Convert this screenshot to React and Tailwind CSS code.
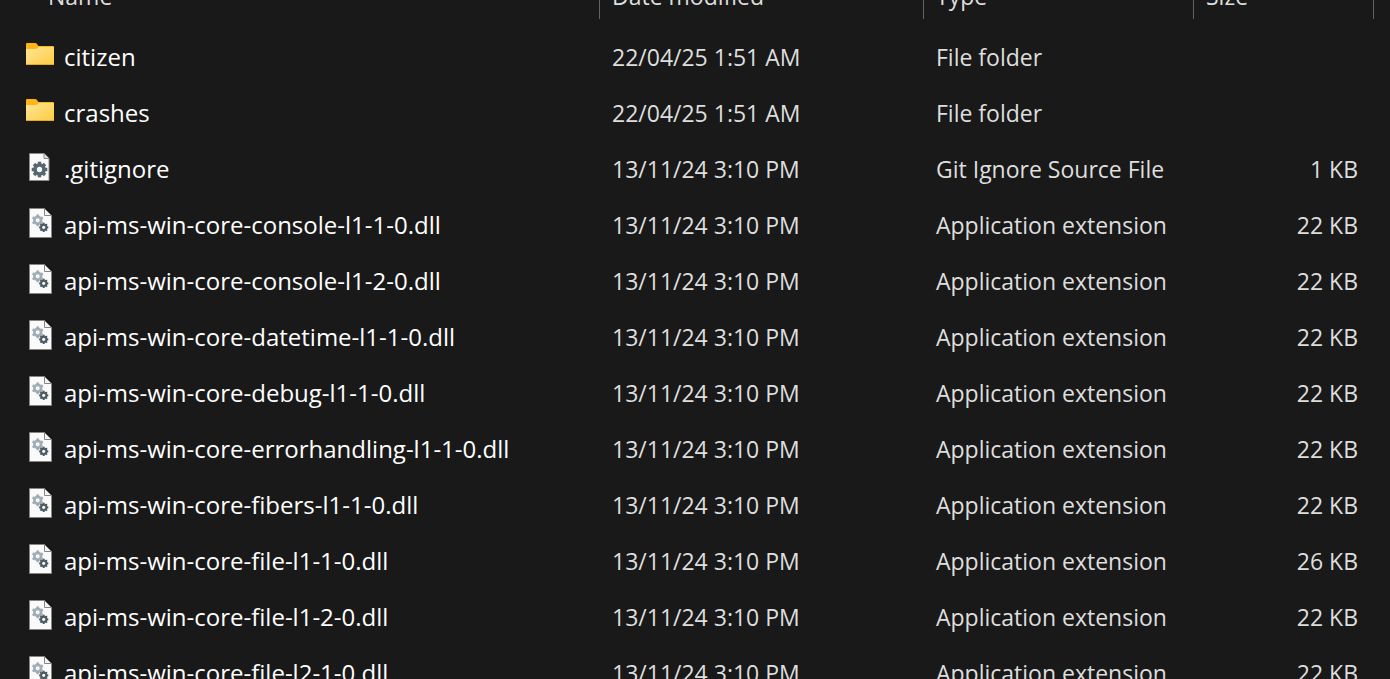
const columns = ["Name", "Date modified", "Type", "Size"];

const dll = (name, size = "22 KB") => ({
  name,
  date: "13/11/24 3:10 PM",
  type: "Application extension",
  size,
  Icon: DllIcon,
});

const files = [
  { name: "citizen", date: "22/04/25 1:51 AM", type: "File folder", size: "", Icon: FolderIcon },
  { name: "crashes", date: "22/04/25 1:51 AM", type: "File folder", size: "", Icon: FolderIcon },
  { name: ".gitignore", date: "13/11/24 3:10 PM", type: "Git Ignore Source File", size: "1 KB", Icon: SettingsFileIcon },
  dll("api-ms-win-core-console-l1-1-0.dll"),
  dll("api-ms-win-core-console-l1-2-0.dll"),
  dll("api-ms-win-core-datetime-l1-1-0.dll"),
  dll("api-ms-win-core-debug-l1-1-0.dll"),
  dll("api-ms-win-core-errorhandling-l1-1-0.dll"),
  dll("api-ms-win-core-fibers-l1-1-0.dll"),
  dll("api-ms-win-core-file-l1-1-0.dll", "26 KB"),
  dll("api-ms-win-core-file-l1-2-0.dll"),
  dll("api-ms-win-core-file-l2-1-0.dll"),
];

const iconClass = "mb-1.5 size-8 shrink-0";

function Gear({ cx, cy, r, teeth, color }) {
  return (
    <g transform={`translate(${cx} ${cy})`}>
      <circle r={r * 0.57} fill="none" stroke={color} strokeWidth={r * 0.46} />
      {Array.from({ length: teeth }, (_, i) => (
        <rect
          key={i}
          x={-r * 0.22}
          y={-r}
          width={r * 0.44}
          height={r * 0.4}
          fill={color}
          transform={`rotate(${(i * 360) / teeth})`}
        />
      ))}
    </g>
  );
}

function FolderIcon() {
  return (
    <svg viewBox="0 0 32 32" className={iconClass} aria-hidden="true">
      <defs>
        <linearGradient id="folder-front" x1="0" y1="0" x2="1" y2="1">
          <stop offset="0" stopColor="#ffe69c" />
          <stop offset="1" stopColor="#ffcb3d" />
        </linearGradient>
      </defs>
      <path d="M2 5a1 1 0 0 1 1-1h8.200c.7 0 1.100.3 1.600.8L14.400 7H29a1 1 0 0 1 1 1v8H2z" fill="#fdb515" />
      <path d="M2 10h9.500c.8 0 1.400-.3 2-.8L14.800 8H30v17a1 1 0 0 1-1 1H3a1 1 0 0 1-1-1z" fill="url(#folder-front)" />
      <path d="M2 25h28a1 1 0 0 1-1 1H3a1 1 0 0 1-1-1z" fill="#e9ab23" />
    </svg>
  );
}

function SettingsFileIcon() {
  return (
    <svg viewBox="0 0 32 32" className={iconClass} aria-hidden="true">
      <path d="M5.500 2.500h14.500l5 5v22H5.500z" fill="#fafafa" stroke="#8b8b8b" />
      <path d="M20 2.500v5h5" fill="#dedede" stroke="#8b8b8b" />
      <Gear cx={15.5} cy={18.5} r={7.8} teeth={8} color="#566770" />
    </svg>
  );
}

function DllIcon() {
  return (
    <svg viewBox="0 0 32 32" className={iconClass} aria-hidden="true">
      <path d="M5.500 1.500h15l7 7v22h-22z" fill="#fafafa" stroke="#858585" />
      <path d="M20.500 1.500v7h7z" fill="#f4f4f4" stroke="#858585" />
      <path d="M21.500 1h7v7z" fill="#191919" />
      <Gear cx={13.7} cy={13.3} r={5.9} teeth={6} color="#a3adb6" />
      <Gear cx={19.7} cy={20.4} r={4.6} teeth={8} color="#4d5b63" />
    </svg>
  );
}

export default function App() {
  return (
    <main className="h-screen overflow-hidden bg-[#191919] font-['Open_Sans','Noto_Sans',sans-serif] text-[23px] leading-8 text-[#dedede]">
      <table className="-mt-[29px] w-full table-fixed border-collapse whitespace-nowrap">
        <colgroup>
          <col />
          <col className="w-[324px]" />
          <col className="w-[270px]" />
          <col className="w-[180px]" />
          <col className="w-4" />
        </colgroup>
        <thead>
          <tr>
            {columns.map((label, i) => (
              <th key={label} scope="col" className="p-0 pb-[11px] text-left font-normal">
                <div
                  className={`flex h-12 items-center border-r border-[#636363] pt-0.5 ${i === 0 ? "pl-12" : "pl-3"}`}
                >
                  {label}
                </div>
              </th>
            ))}
            <td />
          </tr>
        </thead>
        <tbody>
          {files.map(({ name, date, type, size, Icon }) => (
            <tr key={name} className="h-14">
              <td className="p-0 pl-6 text-2xl leading-8 text-white">
                <div className="flex items-center gap-2">
                  <Icon />
                  <span className="pb-0.5">{name}</span>
                </div>
              </td>
              <td className="p-0 pb-0.5 pl-3">{date}</td>
              <td className="p-0 pb-0.5 pl-3">{type}</td>
              <td className="p-0 pr-4 pb-0.5 text-right">{size}</td>
              <td />
            </tr>
          ))}
        </tbody>
      </table>
    </main>
  );
}
